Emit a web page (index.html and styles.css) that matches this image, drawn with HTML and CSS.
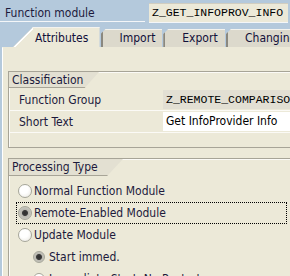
FILE: index.html
```html
<!DOCTYPE html>
<html lang="en">
<head>
    <meta charset="UTF-8">
    <title>Function Builder</title>
    <link rel="stylesheet" href="styles.css">
</head>
<body>

<div class="topbar">
    <span class="fm-label">Function module</span>
    <span class="fm-field">Z_GET_INFOPROV_INFO</span>
</div>

<div class="tabs">
    <div class="tab active">Attributes</div>
    <div class="tab">Import</div>
    <div class="tab">Export</div>
    <div class="tab">Changing</div>
</div>

<div class="panel">
    <div class="group">
        <div class="group-title">Classification</div>
        <div class="row">
            <span class="row-label">Function Group</span>
            <span class="field readonly">Z_REMOTE_COMPARISON</span>
        </div>
        <div class="row">
            <span class="row-label">Short Text</span>
            <span class="field">Get InfoProvider Info</span>
        </div>
    </div>

    <div class="group">
        <div class="group-title">Processing Type</div>
        <div class="radios">
            <label class="radio"><span class="dot"></span>Normal Function Module</label>
            <label class="radio focus"><span class="dot on"></span>Remote-Enabled Module</label>
            <label class="radio"><span class="dot"></span>Update Module</label>
            <label class="radio sub"><span class="dot on"></span>Start immed.</label>
            <label class="radio sub"><span class="dot"></span>Immediate Start, No Restart</label>
        </div>
    </div>
</div>

</body>
</html>
```

FILE: styles.css
```css
body {
    margin: 0;
    width: 290px;
    height: 276px;
    overflow: hidden;
    background-color: #b4c9dc;
    font-family: "DejaVu Sans Condensed", "DejaVu Sans", sans-serif;
    font-size: 12px;
    color: #1c1a3c;
}
.topbar {
    display: flex;
    align-items: flex-start;
    height: 27px;
    padding-top: 3px;
    box-sizing: border-box;
}
.fm-label {
    width: 145px;
    height: 19px;
    padding-left: 5px;
    padding-top: 2px;
    box-sizing: border-box;
    border-bottom: 1px solid #f4f6f8;
    line-height: 16px;
}
.fm-field {
    margin-left: 4px;
    width: 136px;
    height: 18px;
    padding-left: 3px;
    background-color: #ece9d8;
    border-top: 1px solid #d0cdc0;
    border-bottom: 1px solid #f4f6f8;
    font-family: "Liberation Mono", monospace;
    font-size: 11.5px;
    line-height: 18px;
    color: #000;
}
.tabs {
    display: flex;
    align-items: flex-end;
    height: 20px;
    padding-left: 13px;
}
.tab {
    height: 18px;
    width: 64px;
    box-sizing: border-box;
    padding-left: 17px;
    background-color: #dcd9cc;
    border-left: 2px solid #8a887f;
    border-top: 1px solid #f4f3ee;
    line-height: 17px;
    color: #12103a;
    clip-path: polygon(5px 0, 100% 0, 100% 100%, 0 100%, 0 5px);
}
.tab.active {
    height: 20px;
    width: 90px;
    padding-left: 22px;
    border-left: none;
    background-color: #ece9d8;
    background-image: linear-gradient(to bottom right, transparent 48%, #ffffff 49%, #ffffff 54%, transparent 55%);
    background-size: 20px 20px;
    background-repeat: no-repeat;
    line-height: 20px;
    clip-path: polygon(20px 0, 100% 0, 100% 100%, 0 100%);
}
.tab + .tab {
    margin-left: 1px;
}
.panel {
    margin-left: 2px;
    height: 205px;
    overflow: hidden;
    padding: 23px 0 0 5px;
    background-color: #ece9d8;
    border-left: 1px solid #ffffff;
    border-top: 1px solid #ece9d8;
}
.group {
    border: 1px solid #a7a497;
    border-right: none;
    box-shadow: inset 1px 1px 0 #fbfaf6;
    margin-bottom: 10px;
}
.group-title {
    width: 90px;
    height: 16px;
    padding-left: 3px;
    box-sizing: border-box;
    background-color: #e3e0d2;
    line-height: 16px;
    color: #1c1a3c;
    clip-path: polygon(0 0, 100% 0, 84% 100%, 0 100%);
    background-image: linear-gradient(to bottom, transparent 15px, #a7a497 15px);
}
.group + .group .group-title {
    width: 114px;
    height: 17px;
    line-height: 17px;
    clip-path: polygon(0 0, 100% 0, 86% 100%, 0 100%);
    background-image: linear-gradient(to bottom, transparent 16px, #a7a497 16px);
}
.group:first-child {
    padding-bottom: 14px;
}
.row {
    display: flex;
    align-items: center;
    height: 21px;
    padding-left: 10px;
    border-bottom: 1px solid #fbfaf6;
}
.row:nth-child(2) {
    margin-top: 1px;
}
.row-label {
    width: 144px;
}
.field {
    flex: 1;
    height: 19px;
    padding-left: 3px;
    background-color: #ffffff;
    line-height: 19px;
    color: #000;
    white-space: nowrap;
    overflow: hidden;
}
.field.readonly {
    background-color: #e2dfd3;
    font-family: "Liberation Mono", monospace;
    font-size: 11.5px;
}
.radios {
    display: flex;
    flex-direction: column;
    padding: 4px 3px 0 7px;
}
.radio {
    display: flex;
    align-items: center;
    height: 20px;
    padding-left: 1px;
    border: 1px solid transparent;
    white-space: nowrap;
}
.radio.focus {
    border: 1px dotted #000;
}
.radio.sub {
    padding-left: 16px;
}
.dot {
    width: 12px;
    height: 12px;
    margin-right: 2px;
    border: 1px solid #a6a69a;
    border-radius: 50%;
    background: radial-gradient(circle at 40% 35%, #ffffff 40%, #e8e6de 100%);
    flex-shrink: 0;
}
.dot.on {
    background: radial-gradient(circle, #2e2e2e 0, #3a3a3a 2.5px, #b9b8b0 3.5px, #d6d5ce 100%);
}
.radio.sub .dot {
    width: 10px;
    height: 10px;
    margin-right: 4px;
}
```
